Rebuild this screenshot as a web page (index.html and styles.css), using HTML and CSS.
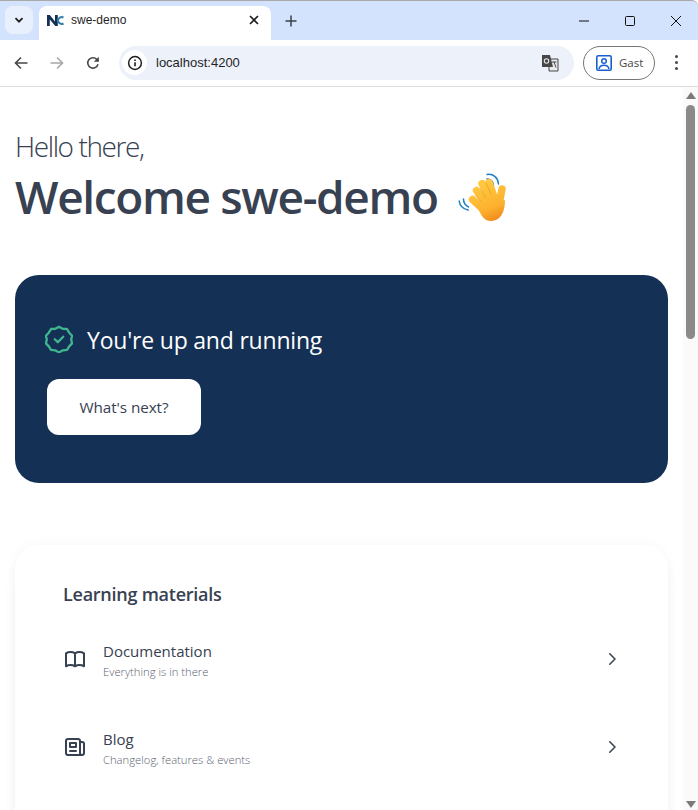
FILE: index.html
```html
<!DOCTYPE html>
<html lang="en">
<head>
<meta charset="utf-8">
<title>swe-demo</title>
<link rel="stylesheet" href="styles.css">
</head>
<body>
<div class="window">
  <header class="tabstrip">
    <button class="tab-search"><svg width="12" height="12" viewBox="0 0 12 12"><path d="M2.5 4.2 6 7.700l3.500-3.500" fill="none" stroke="#1f1f1f" stroke-width="1.800"/></svg></button>
    <div class="tab">
      <svg class="favicon" width="17" height="13" viewBox="0 0 17 13"><path d="M0 12V1h2.800L8 7.500V1h2.800v11H8.300L2.800 5.500V12z" fill="#143055"/><path d="M16.500 3.500A4 4 0 0 0 10.800 6.500a4 4 0 0 0 5.700 3" fill="none" stroke="#2e7fa8" stroke-width="2"/></svg>
      <span class="tab-title">swe-demo</span>
      <svg class="tab-close" width="10" height="10" viewBox="0 0 10 10"><path d="M1 1l8 8M9 1l-8 8" stroke="#1f1f1f" stroke-width="1.700"/></svg>
    </div>
    <svg class="new-tab" width="12" height="12" viewBox="0 0 12 12"><path d="M6 .5v11M.5 6h11" stroke="#3c4043" stroke-width="1.500"/></svg>
    <div class="window-controls">
      <svg width="10" height="10" viewBox="0 0 10 10"><path d="M0 5h10" stroke="#111" stroke-width="1"/></svg>
      <svg width="10" height="10" viewBox="0 0 10 10"><rect x=".5" y=".5" width="9" height="9" rx="1" fill="none" stroke="#111"/></svg>
      <svg width="10" height="10" viewBox="0 0 10 10"><path d="M0 0l10 10M10 0L0 10" stroke="#111" stroke-width="1"/></svg>
    </div>
  </header>
  <nav class="toolbar">
    <svg class="nav-icon" width="14" height="14" viewBox="0 0 14 14"><path d="M13.500 7H1.500M7 1.500 1.500 7 7 12.500" fill="none" stroke="#474747" stroke-width="1.600"/></svg>
    <svg class="nav-icon" width="14" height="14" viewBox="0 0 14 14"><path d="M.5 7h12M7 1.500 12.500 7 7 12.500" fill="none" stroke="#a8a8a8" stroke-width="1.600"/></svg>
    <svg class="nav-icon" width="14" height="14" viewBox="0 0 14 14"><path d="M12 8.200A5.200 5.200 0 1 1 10.800 3.400L12.400 5" fill="none" stroke="#474747" stroke-width="1.600"/><path d="M12.800.8v5h-5z" fill="#474747"/></svg>
    <div class="omnibox">
      <span class="info-chip"><svg width="16" height="16" viewBox="0 0 16 16"><circle cx="8" cy="8" r="6.400" fill="none" stroke="#1f1f1f" stroke-width="1.500"/><path d="M8 7.200v4M8 4.500v1.400" stroke="#1f1f1f" stroke-width="1.600"/></svg></span>
      <span class="url">localhost:4200</span>
      <svg class="translate" width="18" height="18" viewBox="0 0 18 18"><path d="M8 5h9v12H8z" fill="#e8eaed" stroke="#474747"/><path d="M1 1h8l3 12H1z" fill="#474747"/><circle cx="5.500" cy="7" r="2.200" fill="none" stroke="#e8eaed" stroke-width="1.100"/><path d="M11 8h4.500M13 8l2 5.500" stroke="#474747" fill="none"/></svg>
    </div>
    <div class="profile">
      <svg width="16" height="16" viewBox="0 0 16 16"><rect x=".8" y=".8" width="14.400" height="14.400" rx="1.500" fill="none" stroke="#1a5fd0" stroke-width="1.600"/><circle cx="8" cy="6" r="2.300" fill="none" stroke="#1a5fd0" stroke-width="1.500"/><path d="M3 14c.6-3 2.500-3.800 5-3.800s4.400.8 5 3.800" fill="none" stroke="#1a5fd0" stroke-width="1.500"/></svg>
      <span>Gast</span>
    </div>
    <div class="kebab"><i></i><i></i><i></i></div>
  </nav>
  <div class="viewport">
    <main class="page">
      <p class="hello">Hello there,</p>
      <h1 class="welcome">Welcome swe-demo
        <svg class="wave" width="50" height="50" viewBox="0 0 50 50">
          <defs><linearGradient id="skin" gradientUnits="userSpaceOnUse" x1="22" y1="12" x2="38" y2="50"><stop offset="0" stop-color="#ffc940"/><stop offset=".65" stop-color="#fcb02e"/><stop offset="1" stop-color="#ef8418"/></linearGradient></defs>
          <g fill="none" stroke="#1f7fc4" stroke-width="1.500" stroke-linecap="round"><path d="M29 7c3-.5 6 2 6.500 6.500M29 2.500c6-1 11 3 11.500 9.500"/><path d="M5.500 27c0 3.500 2 6.500 5 8M1.200 29c.5 4.500 4 8 9 9"/></g>
          <g fill="none" stroke="url(#skin)" stroke-width="7.400" stroke-linecap="round">
            <path d="M44 17l-3 16"/>
            <path d="M14.500 27.500 27 39"/>
            <path d="M18.500 18.500 30 35"/>
            <path d="M24 11.500l10 20"/>
            <path d="M31 10.500l7 20"/>
          </g>
          <g fill="none" stroke="#eb9420" stroke-width=".8" stroke-linecap="round" opacity=".75">
            <path d="M17.500 23.500 25 32"/><path d="M22 16.500 29 28"/><path d="M28 11 33 22"/>
          </g>
          <path d="M19 33.500 30 25l8-1 9 4.500c0 12-5 20.500-14 20.500-6 0-10-4-14-15.500z" fill="url(#skin)"/>
        </svg>
      </h1>
      <section class="hero">
        <h2 class="hero-title">
          <svg class="badge" width="28" height="28" viewBox="0 0 28 28" fill="none" stroke="#3fb68f" stroke-width="2.300"><path d="M14 1.800l3.700 2 4.300.2 2.200 3.700 2.900 3-.9 3.900.9 3.800-2.900 3-2.200 3.500-4.200.4-3.800 2.100-3.800-2.100-4.200-.4-2.200-3.500-2.900-3 .9-3.800-.9-3.900 2.900-3 2.200-3.700 4.300-.2z" stroke-linejoin="round"/><path d="M9.800 14.300l3 3 5.400-5.600" stroke-linecap="round" stroke-linejoin="round"/></svg>
          <span class="hero-text">You're up and running</span>
        </h2>
        <a class="next-btn">What's next?</a>
      </section>
      <section class="card">
        <h2 class="card-title">Learning materials</h2>
        <a class="link-row">
          <svg class="row-icon" width="24" height="24" viewBox="0 0 24 24" fill="none" stroke="#374151" stroke-width="2" stroke-linecap="round" stroke-linejoin="round"><path d="M12 6.300C10.800 5.500 9.200 5 7.500 5S4.200 5.500 3 6.300V19.300c1.200-.8 2.800-1.300 4.500-1.300s3.300.5 4.500 1.300m0-13c1.200-.8 2.800-1.300 4.500-1.300s3.300.5 4.500 1.300v13c-1.200-.8-2.800-1.300-4.500-1.300s-3.300.5-4.500 1.300z"/></svg>
          <div class="row-text"><span class="row-name">Documentation</span><span class="row-desc">Everything is in there</span></div>
          <svg class="chevron" width="24" height="24" viewBox="0 0 24 24" fill="none" stroke="#374151" stroke-width="2" stroke-linecap="round" stroke-linejoin="round"><path d="M9 5l7 7-7 7"/></svg>
        </a>
        <a class="link-row">
          <svg class="row-icon" width="24" height="24" viewBox="0 0 24 24" fill="none" stroke="#374151" stroke-width="2" stroke-linecap="round" stroke-linejoin="round"><path d="M19 20H5a2 2 0 0 1-2-2V6a2 2 0 0 1 2-2h10a2 2 0 0 1 2 2v1m2 13a2 2 0 0 1-2-2V7m2 13a2 2 0 0 0 2-2V9a2 2 0 0 0-2-2h-2m-4-3H9M7 16h6M7 8h6v4H7V8z"/></svg>
          <div class="row-text"><span class="row-name">Blog</span><span class="row-desc">Changelog, features &amp; events</span></div>
          <svg class="chevron" width="24" height="24" viewBox="0 0 24 24" fill="none" stroke="#374151" stroke-width="2" stroke-linecap="round" stroke-linejoin="round"><path d="M9 5l7 7-7 7"/></svg>
        </a>
      </section>
    </main>
    <aside class="scrollbar">
      <span class="arrow-up"></span>
      <span class="thumb"></span>
      <span class="arrow-down"></span>
    </aside>
  </div>
</div>
</body>
</html>
```
FILE: styles.css
```css
* { box-sizing: border-box; }
html, body { margin: 0; height: 100%; overflow: hidden; }
body { font-family: "Open Sans", "Noto Sans", sans-serif; color: #374151; background: #fff; }
.window { width: 698px; height: 810px; display: flex; flex-direction: column; }

.tabstrip { height: 40px; flex: none; background: #d3e3fd; border-top: 1px solid #a9a9a9; display: flex; align-items: flex-end; padding-left: 5px; border-top-right-radius: 6px; }
.tab-search { width: 28px; height: 28px; margin: 0 6px 6px 0; border: 0; padding: 0; border-radius: 8px; background: #e9f0fd; display: flex; align-items: center; justify-content: center; }
.tab { width: 232px; height: 34px; background: #fff; border-radius: 8px 8px 0 0; display: flex; align-items: center; padding: 0 8px 6px 8px; }
.favicon { flex: none; }
.tab-title { font-family: "Liberation Sans", sans-serif; font-size: 12px; color: #1f1f1f; margin-left: 7px; flex: 1; }
.tab-close { margin-right: 4px; }
.new-tab { margin: 0 0 13px 14px; }
.window-controls { margin-left: auto; display: flex; align-items: center; gap: 36px; padding: 0 17px 14px 0; }

.toolbar { height: 47px; flex: none; background: #fff; border-bottom: 1px solid #dadce0; display: flex; align-items: center; padding: 0 0 1px 14px; }
.nav-icon { flex: none; margin-right: 22px; }
.nav-icon:nth-of-type(3) { margin-right: 19px; }
.omnibox { width: 455px; height: 34px; border-radius: 17px; background: #ecf1fa; display: flex; align-items: center; padding: 0 15px 0 3px; }
.info-chip { width: 25px; height: 25px; background: #fff; border-radius: 50%; display: flex; align-items: center; justify-content: center; }
.url { font-family: "Liberation Sans", sans-serif; font-size: 13px; color: #1f1f1f; margin-left: 9px; flex: 1; }
.profile { width: 72px; height: 34px; margin-left: 9px; border: 1px solid #747775; border-radius: 17px; display: flex; align-items: center; padding-left: 12px; gap: 7px; font-size: 11.500px; color: #474747; }
.kebab { display: flex; flex-direction: column; gap: 3px; margin-left: 20px; }
.kebab i { width: 3px; height: 3px; border-radius: 50%; background: #474747; display: block; }

.viewport { flex: 1; display: flex; min-height: 0; overflow: hidden; }
.page { flex: 1; padding: 41px 15px 0 15px; min-width: 0; }
.hello { margin: 0; font-size: 28px; font-weight: 300; line-height: 36px; letter-spacing: -1.400px; }
.welcome { margin: 4px 0 0; font-size: 46px; font-weight: 600; line-height: 56px; letter-spacing: -1.350px; display: flex; align-items: center; gap: 20px; height: 56px; }
.wave { flex: none; margin-top: 2px; }

.hero { margin-top: 51px; height: 208px; border-radius: 24px; background: #143055; padding: 48px 32px; }
.hero-title { margin: 0; display: flex; align-items: center; gap: 12px; font-size: 23px; font-weight: 400; line-height: 32px; color: #fff; height: 32px; letter-spacing: -.2px; }
.hero-text { padding-top: 2px; }
.badge { flex: none; margin-left: -2px; margin-right: 2px; }
.next-btn { margin-top: 24px; display: flex; align-items: center; justify-content: center; width: 154px; height: 56px; background: #fff; border-radius: 12px; font-size: 15.300px; letter-spacing: -.1px; }

.card { margin-top: 62px; height: 400px; border-radius: 24px; background: #fff; padding: 33px 48px; box-shadow: 0 0 14px rgba(0,0,0,.035), 0 10px 15px -3px rgba(0,0,0,.05), 0 4px 6px -2px rgba(0,0,0,.025); }
.card-title { margin: 0; font-size: 18px; font-weight: 600; line-height: 32px; letter-spacing: -.25px; }
.link-row { display: flex; align-items: center; height: 88px; }
.card-title + .link-row { margin-top: 5px; }
.row-icon { flex: none; }
.row-text { margin: 1px 0 0 16px; flex: 1; display: flex; flex-direction: column; }
.row-name { font-size: 15px; line-height: 22px; }
.row-desc { margin-top: 1px; font-size: 11.250px; line-height: 17px; color: #5b6472; font-weight: 300; }
.chevron { flex: none; width: 18px; height: 18px; margin-right: -1px; }

.scrollbar { width: 15px; flex: none; background: #fafafa; position: relative; display: flex; flex-direction: column; align-items: center; }
.arrow-up { margin-top: 5px; width: 0; height: 0; border: 5px solid transparent; border-top: 0; border-bottom: 7px solid #7a7a7a; }
.thumb { margin-top: 6px; width: 9px; height: 234px; border-radius: 5px; background: #8a8a8a; }
.arrow-down { margin-top: auto; margin-bottom: 2px; width: 0; height: 0; border: 5px solid transparent; border-bottom: 0; border-top: 7px solid #7a7a7a; }
```
